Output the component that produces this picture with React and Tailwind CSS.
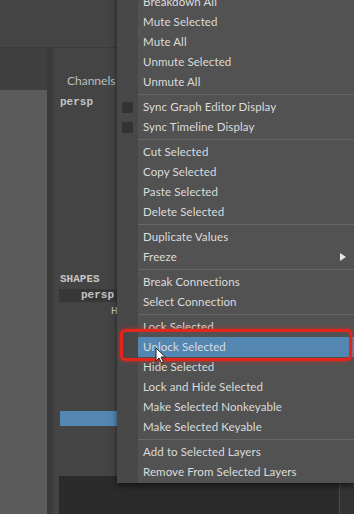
import React from "react";

const items = [
  { label: "Breakdown All" },
  { label: "Mute Selected" },
  { label: "Mute All" },
  { label: "Unmute Selected" },
  { label: "Unmute All" },
  { sep: true },
  { label: "Sync Graph Editor Display", check: true },
  { label: "Sync Timeline Display", check: true },
  { sep: true },
  { label: "Cut Selected" },
  { label: "Copy Selected" },
  { label: "Paste Selected" },
  { label: "Delete Selected" },
  { sep: true },
  { label: "Duplicate Values" },
  { label: "Freeze", sub: true },
  { sep: true },
  { label: "Break Connections" },
  { label: "Select Connection" },
  { sep: true },
  { label: "Lock Selected" },
  { label: "Unlock Selected", active: true },
  { label: "Hide Selected" },
  { label: "Lock and Hide Selected" },
  { label: "Make Selected Nonkeyable" },
  { label: "Make Selected Keyable" },
  { sep: true },
  { label: "Add to Selected Layers" },
  { label: "Remove From Selected Layers" },
];

function MenuRow({ item }) {
  if (item.sep) {
    return (
      <div className="flex h-[5px]">
        <div className="w-[21px] bg-[#484848]" />
        <div className="flex-1 flex items-center">
          <div className="h-px w-full bg-[#676767]" />
        </div>
      </div>
    );
  }
  return (
    <div className="flex h-[20px]">
      <div className="w-[21px] bg-[#484848] flex items-center justify-center">
        {item.check && <div className="w-[11px] h-[11px] bg-[#333333]" />}
      </div>
      <div
        className={
          "flex-1 flex items-center justify-between pl-[5px] pr-[8px] text-[11.5px] tracking-[0.1px] leading-[20px] text-[#dcdcdc] " +
          (item.active ? "bg-[#5486b2]" : "")
        }
      >
        <span>{item.label}</span>
        {item.sub && (
          <svg width="6" height="8" viewBox="0 0 6 8">
            <path d="M0 0 L6 4 L0 8 Z" fill="#e6e6e6" />
          </svg>
        )}
      </div>
    </div>
  );
}

export default function App() {
  return (
    <div className="relative w-[354px] h-[514px] overflow-hidden bg-[#3c3c3c] font-['Lato',sans-serif]">
      <div className="flex flex-col h-full">
        <div className="h-[48px] w-[117px] bg-[#444444] border-b border-[#3a3a3a]" />
        <div className="flex flex-1">
          <div className="w-[47px] flex flex-col">
            <div className="h-[42px] bg-[#404040]" />
            <div className="flex-1 bg-[#5b5b5b]" />
          </div>
          <div className="w-[6px] bg-[#3b3b3b]" />
          <div className="flex-1 flex flex-col">
            <div className="flex flex-1">
              <div className="w-[64px] bg-[#444444] flex flex-col font-['Liberation_Mono',monospace] font-bold text-[11px] text-[#c4c4c4]">
                <div className="pl-[14px] pt-[25px] font-['Lato',sans-serif] font-normal text-[12px] leading-[16px] text-[#bdbdbd]">
                  Channels
                </div>
                <div className="pl-[7px] pt-[6px] leading-[14px]">persp</div>
                <div className="pl-[7px] pt-[163px] leading-[14px]">SHAPES</div>
                <div className="ml-[6px] mt-[3px] h-[13px] bg-[#373737] pl-[22px] leading-[13px] whitespace-nowrap">
                  persp
                </div>
                <div className="pl-[58px] pt-[2px] leading-[14px] font-normal">H</div>
                <div className="ml-[7px] mt-[93px] h-[15px] bg-[#5486b2]" />
              </div>
              <div className="flex-1 bg-[#3a3a3a]" />
            </div>
            <div className="flex h-[38px]">
              <div className="w-[6px] bg-[#444444]" />
              <div className="flex-1 bg-[#2b2b2b]" />
              <div className="w-px bg-[#4a4a4a]" />
              <div className="w-[14px] bg-[#333333]" />
            </div>
          </div>
        </div>
      </div>

      <div className="absolute left-[117px] top-[-8px] w-[237px] flex flex-col bg-[#525252] shadow-[0_3px_6px_rgba(0,0,0,0.55)]">
        {items.map((item, i) => (
          <MenuRow key={i} item={item} />
        ))}
        <div className="flex h-px">
          <div className="w-[21px] bg-[#484848]" />
        </div>
      </div>

      <div className="absolute left-[120px] top-[329px] w-[232px] h-[32px] rounded-[5px] border-[3px] border-[#e2261e] shadow-[0_0_4px_rgba(230,40,30,0.8)]" />

      <svg className="absolute left-[155px] top-[347px]" width="12" height="17" viewBox="0 0 12 17">
        <path
          d="M1 1 L1 14 L4 11 L6.5 16 L8.5 15 L6 10 L10.5 10 Z"
          fill="#ffffff"
          stroke="#222222"
          strokeWidth="1"
          strokeLinejoin="round"
        />
      </svg>
    </div>
  );
}
